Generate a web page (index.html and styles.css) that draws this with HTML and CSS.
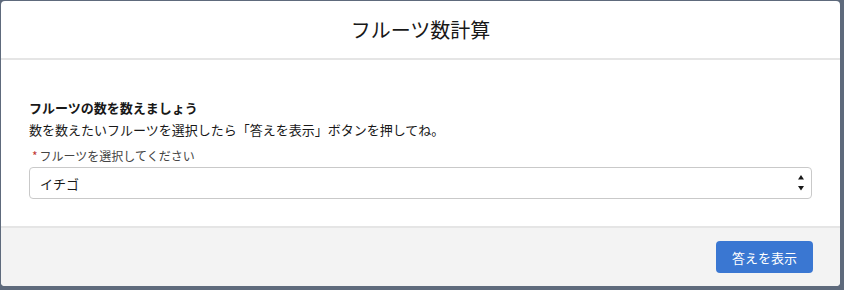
FILE: index.html
```html
<!DOCTYPE html>
<html lang="ja">
<head>
    <meta charset="UTF-8">
    <title>フルーツ数計算</title>
    <link rel="stylesheet" href="styles.css">
</head>
<body>
    <div class="modal">
        <div class="modal-header">
            <h2>フルーツ数計算</h2>
        </div>
        <div class="modal-body">
            <p class="lead">フルーツの数を数えましょう</p>
            <p class="desc">数を数えたいフルーツを選択したら「答えを表示」ボタンを押してね。</p>
            <div class="form-group">
                <label for="fruit"><abbr class="required">*</abbr>フルーツを選択してください</label>
                <div class="select-wrap">
                    <select id="fruit">
                        <option>イチゴ</option>
                        <option>リンゴ</option>
                        <option>バナナ</option>
                    </select>
                    <span class="arrows">
                        <svg width="8" height="16" viewBox="0 0 8 16"><path d="M4 0 L7 4.5 H1 Z M1 11 H7 L4 15.5 Z" fill="#181818"/></svg>
                    </span>
                </div>
            </div>
        </div>
        <div class="modal-footer">
            <button class="btn-brand">答えを表示</button>
        </div>
    </div>
</body>
</html>
```

FILE: styles.css
```css
html, body {
    height: 100%;
    margin: 0;
    padding: 0;
}
body {
    background-color: #5e6a7c;
    font-family: "Noto Sans CJK JP", "Noto Sans", sans-serif;
    color: #181818;
    padding: 1px 4px 4px 1px;
    box-sizing: border-box;
}
.modal {
    background-color: #fff;
    border-radius: 4px;
    overflow: hidden;
    height: 285px;
    display: flex;
    flex-direction: column;
}
.modal-header {
    height: 57px;
    display: flex;
    align-items: center;
    justify-content: center;
    border-bottom: 2px solid #e5e5e5;
}
.modal-header h2 {
    margin: 0;
    font-size: 20px;
    font-weight: 400;
    color: #181818;
}
.modal-body {
    flex: 1;
    padding: 39px 28px 0 28px;
}
.lead {
    margin: 0;
    font-size: 13px;
    font-weight: 700;
    line-height: 18px;
}
.desc {
    margin: 3px 0 0 0;
    font-size: 13px;
    line-height: 20px;
}
.form-group {
    margin-top: 7px;
}
.form-group label {
    display: block;
    font-size: 12px;
    line-height: 18px;
    color: #444;
    margin-bottom: 2px;
}
.required {
    color: #c23934;
    text-decoration: none;
    margin: 0 2px 0 3px;
    font-size: 12px;
}
.select-wrap {
    position: relative;
}
.select-wrap select {
    width: 100%;
    height: 32px;
    padding: 0 24px 0 10px;
    border: 1px solid #c9c9c9;
    border-radius: 4px;
    background-color: #fff;
    font-family: inherit;
    font-size: 13px;
    color: #181818;
    appearance: none;
    -webkit-appearance: none;
}
.arrows {
    position: absolute;
    right: 7px;
    top: 8px;
    pointer-events: none;
    display: flex;
}
.modal-footer {
    background-color: #f3f3f3;
    border-top: 2px solid #e5e5e5;
    height: 60px;
    box-sizing: border-box;
    display: flex;
    align-items: center;
    justify-content: flex-end;
    padding: 0 27px 0 0;
}
.btn-brand {
    height: 32px;
    padding: 0 16px;
    border: none;
    border-radius: 4px;
    background-color: #3a77d2;
    color: #fff;
    font-family: inherit;
    font-size: 13px;
    cursor: pointer;
}
```
